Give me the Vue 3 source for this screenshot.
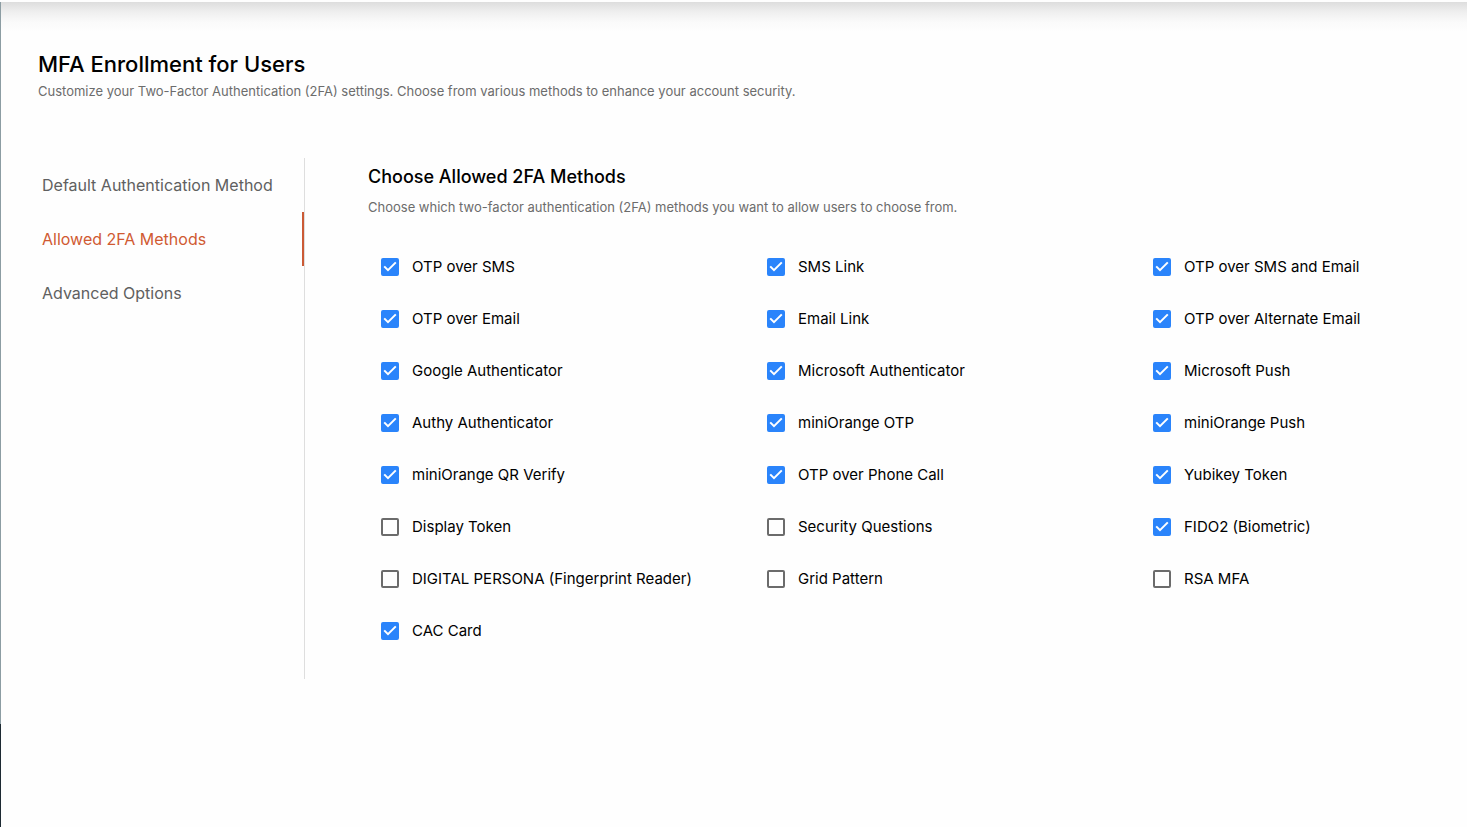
<script setup>
import { ref } from 'vue'

const tabs = ['Default Authentication Method', 'Allowed 2FA Methods', 'Advanced Options']
const active = ref(1)

const off = ['Display Token', 'Security Questions', 'DIGITAL PERSONA (Fingerprint Reader)', 'Grid Pattern', 'RSA MFA']
const methods = ref(
  [
    'OTP over SMS', 'SMS Link', 'OTP over SMS and Email',
    'OTP over Email', 'Email Link', 'OTP over Alternate Email',
    'Google Authenticator', 'Microsoft Authenticator', 'Microsoft Push',
    'Authy Authenticator', 'miniOrange OTP', 'miniOrange Push',
    'miniOrange QR Verify', 'OTP over Phone Call', 'Yubikey Token',
    'Display Token', 'Security Questions', 'FIDO2 (Biometric)',
    'DIGITAL PERSONA (Fingerprint Reader)', 'Grid Pattern', 'RSA MFA',
    'CAC Card'
  ].map((name) => ({ name, on: !off.includes(name) }))
)
</script>

<template>
  <div class="page">
    <div class="rail"><span class="rail-light"></span><span class="rail-dark"></span></div>
    <main class="content">
      <header>
        <h1>MFA Enrollment for Users</h1>
        <p class="lead">Customize your Two-Factor Authentication (2FA) settings. Choose from various methods to enhance your account security.</p>
      </header>
      <div class="body">
        <nav class="tabs">
          <button
            v-for="(tab, i) in tabs"
            :key="tab"
            type="button"
            class="tab"
            :class="{ active: i === active }"
            @click="active = i"
          >{{ tab }}</button>
        </nav>
        <section class="panel">
          <h2>Choose Allowed 2FA Methods</h2>
          <p class="hint">Choose which two-factor authentication (2FA) methods you want to allow users to choose from.</p>
          <div class="grid">
            <label v-for="m in methods" :key="m.name" class="method">
              <span class="box">
                <input v-model="m.on" type="checkbox" />
                <svg v-if="m.on" viewBox="0 0 18 18" aria-hidden="true"><path d="M3.2 8.4 7 12.2 14.8 4.4" /></svg>
              </span>
              <span>{{ m.name }}</span>
            </label>
          </div>
        </section>
      </div>
    </main>
  </div>
</template>

<style>
body {
  margin: 0;
  background: #fefefe;
}
</style>

<style scoped>
.page {
  box-sizing: border-box;
  min-height: 100vh;
  padding-top: 2px;
  display: flex;
  overflow: hidden;
  font-family: Inter, "Open Sans", sans-serif;
  color: #000;
}
.rail {
  flex: none;
  width: 1px;
  display: flex;
  flex-direction: column;
}
.rail-light {
  flex: 1;
  background: #8c9da3;
}
.rail-dark {
  height: 103px;
  background: #1d2a33;
}
.content {
  flex: 1;
  min-width: 0;
  padding: 46px 0 0 37px;
  background: linear-gradient(#dddddd, #efefef 10px, #fafafa 20px, #fefefe 30px);
}
h1, h2, p {
  margin: 0;
}
h1 {
  font-size: 22px;
  line-height: 32px;
  font-weight: 500;
}
.lead, .hint {
  font-size: 13px;
  line-height: 20px;
  color: #6c6c6c;
}
.lead {
  margin-top: 1px;
}
.body {
  display: flex;
  margin-top: 57px;
}
.tabs {
  flex: none;
  box-sizing: border-box;
  width: 267px;
  min-height: 521px;
  border-right: 1px solid #dedede;
  display: flex;
  flex-direction: column;
}
.tab {
  height: 54px;
  padding: 0 0 0 4px;
  border: 0;
  border-right: 2px solid transparent;
  background: none;
  font: 400 16px/20px Inter, "Open Sans", sans-serif;
  color: #606060;
  text-align: left;
  white-space: nowrap;
  cursor: pointer;
}
.tab.active {
  color: #d05a32;
  border-right-color: #cb5a35;
}
.panel {
  flex: 1;
  min-width: 0;
  padding: 7px 0 0 63px;
}
h2 {
  font-size: 18px;
  line-height: 24px;
  font-weight: 500;
}
.hint {
  margin-top: 8px;
}
.grid {
  display: grid;
  grid-template-columns: repeat(3, minmax(0, 1fr));
  grid-auto-rows: 52px;
  column-gap: 72px;
  margin-top: 24px;
  padding-left: 13px;
}
.method {
  display: flex;
  align-items: center;
  gap: 13px;
  font-size: 15px;
  line-height: 20px;
  white-space: nowrap;
}
.box {
  flex: none;
  position: relative;
  width: 18px;
  height: 18px;
}
.box input {
  appearance: none;
  display: block;
  box-sizing: border-box;
  width: 18px;
  height: 18px;
  margin: 0;
  border: 2px solid #6b6b6b;
  border-radius: 2px;
}
.box input:checked {
  border-color: #2a84fb;
  background: #2a84fb;
}
.box svg {
  position: absolute;
  inset: 0;
  fill: none;
  stroke: #fff;
  stroke-width: 2;
  pointer-events: none;
}
</style>
